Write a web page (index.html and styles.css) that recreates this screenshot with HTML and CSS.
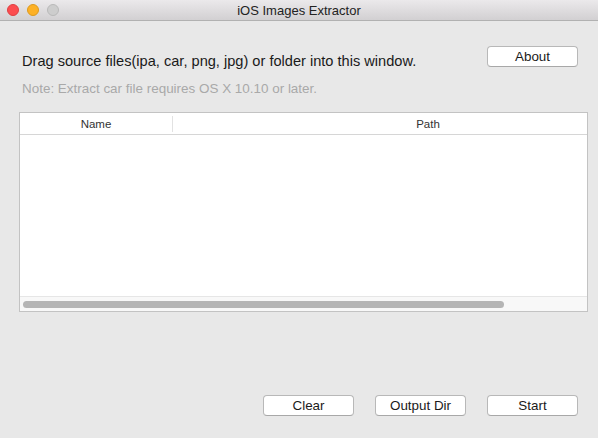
FILE: index.html
```html
<!DOCTYPE html>
<html>
<head>
<meta charset="utf-8">
<link rel="stylesheet" href="styles.css">
</head>
<body>
<div class="window">
  <div class="titlebar">
    <div class="lights">
      <span class="light red"></span>
      <span class="light yellow"></span>
      <span class="light gray"></span>
    </div>
    <div class="title">iOS Images Extractor</div>
  </div>
  <div class="content">
    <div class="top-row">
      <div class="drag-text">Drag source files(ipa, car, png, jpg) or folder into this window.</div>
      <button class="btn">About</button>
    </div>
    <div class="note">Note: Extract car file requires OS X 10.10 or later.</div>
    <div class="table">
      <div class="thead">
        <div class="th th-name">Name</div>
        <div class="th th-path">Path</div>
      </div>
      <div class="tbody"></div>
      <div class="hscroll"><div class="thumb"></div></div>
    </div>
    <div class="bottom-row">
      <button class="btn">Clear</button>
      <button class="btn">Output Dir</button>
      <button class="btn">Start</button>
    </div>
  </div>
</div>
</body>
</html>
```
FILE: styles.css
```css
html, body {
  margin: 0;
  padding: 0;
  width: 598px;
  height: 438px;
  overflow: hidden;
  background: #e8e8e8;
  font-family: "Liberation Sans", Arial, sans-serif;
}
.window {
  width: 598px;
  height: 438px;
  display: flex;
  flex-direction: column;
  background: #e8e8e8;
}
.titlebar {
  height: 20px;
  flex: none;
  position: relative;
  background: linear-gradient(#ebe9eb, #d2d0d2);
  border-bottom: 1px solid #b1b1b1;
  display: flex;
  align-items: center;
  justify-content: center;
}
.lights {
  position: absolute;
  left: 7px;
  top: 4px;
  display: flex;
  gap: 8px;
}
.light {
  width: 12px;
  height: 12px;
  border-radius: 50%;
  box-sizing: border-box;
}
.red { background: #fc4c4f; border: 1px solid #de3f42; }
.yellow { background: #fdb126; border: 1px solid #dd9a1e; }
.gray { background: #cdcdcd; border: 1px solid #b9b9b9; }
.title {
  font-size: 13px;
  color: #222;
  margin-top: 1px;
}
.content {
  flex: 1;
  display: flex;
  flex-direction: column;
  padding: 0 20px 0 19px;
}
.top-row {
  display: flex;
  align-items: center;
  justify-content: space-between;
  margin-top: 25px;
  height: 21px;
}
.drag-text {
  font-size: 14.6px;
  color: #1a1a1a;
  padding-left: 3px;
  margin-top: 8px;
}
.btn {
  width: 91px;
  height: 21px;
  flex: none;
  box-sizing: border-box;
  background: #fff;
  border: 1px solid #b8b8b8;
  border-bottom-color: #a8a8a8;
  border-radius: 4px;
  font-family: "Liberation Sans", Arial, sans-serif;
  font-size: 13.4px;
  color: #1a1a1a;
  padding: 0;
  line-height: 19px;
}
.note {
  font-size: 13.45px;
  color: #a9a9a9;
  padding-left: 3px;
  margin-top: 14px;
  height: 16px;
}
.table {
  margin-top: 15px;
  margin-right: -10px;
  width: 569px;
  height: 200px;
  box-sizing: border-box;
  border: 1px solid #c3c3c3;
  background: #fff;
  display: flex;
  flex-direction: column;
  overflow: hidden;
}
.thead {
  height: 21px;
  flex: none;
  display: flex;
  align-items: center;
  border-bottom: 1px solid #d6d6d6;
  font-size: 11.5px;
  color: #333;
  overflow: hidden;
}
.th {
  flex: none;
  text-align: center;
  height: 16px;
  line-height: 16px;
}
.th-name {
  width: 152px;
  border-right: 1px solid #e2e2e2;
}
.th-path {
  width: 510px;
}
.tbody {
  flex: 1;
}
.hscroll {
  height: 14px;
  flex: none;
  background: #f8f8f8;
  border-top: 1px solid #e6e6e6;
  display: flex;
  align-items: center;
  padding-left: 3px;
}
.thumb {
  width: 481px;
  height: 7px;
  border-radius: 4px;
  background: #b5b5b5;
}
.bottom-row {
  margin-top: auto;
  margin-bottom: 22px;
  display: flex;
  justify-content: flex-end;
  gap: 21px;
}
```
